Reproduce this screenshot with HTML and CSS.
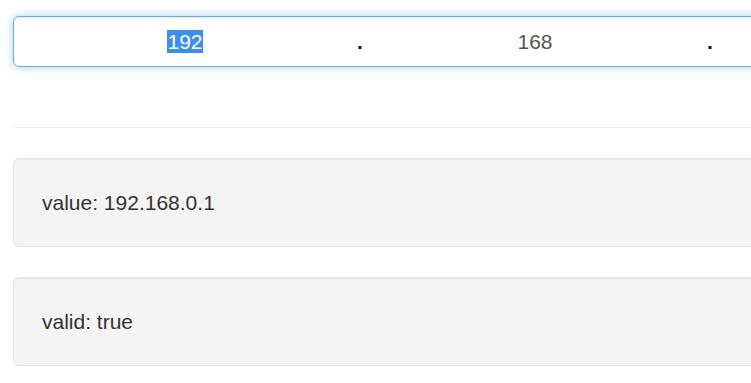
FILE: index.html
```html
<!DOCTYPE html>
<html lang="en">
<head>
    <meta charset="UTF-8">
    <meta name="viewport" content="width=device-width, initial-scale=1.0">
    <title>IP Address Input</title>
    <link rel="stylesheet" href="styles.css">
</head>
<body>
    <div class="page">
        <div class="ip-input">
            <div class="octet"><span class="selected">192</span></div>
            <div class="dot">.</div>
            <div class="octet">168</div>
            <div class="dot">.</div>
            <div class="octet">0</div>
            <div class="dot">.</div>
            <div class="octet">1</div>
        </div>

        <hr>

        <div class="well">value: 192.168.0.1</div>
        <div class="well">valid: true</div>
    </div>
</body>
</html>
```

FILE: styles.css
```css
body {
    margin: 0;
    font-family: "Liberation Sans", Arial, sans-serif;
    font-size: 21px;
    line-height: 30px;
    color: #333;
    background-color: #fff;
    overflow: hidden;
}

.page {
    width: 1500px;
    padding: 16px 0 0 13px;
}

.ip-input {
    display: flex;
    height: 51px;
    box-sizing: border-box;
    border: 1px solid #66afe9;
    border-radius: 6px;
    box-shadow: inset 0 1px 1px rgba(0, 0, 0, 0.075), 0 0 8px rgba(102, 175, 233, 0.6);
}

.octet {
    width: 342px;
    flex: none;
    text-align: center;
    line-height: 49px;
    color: #555;
}

.selected {
    background-color: #3b8eea;
    color: #fff;
}

.dot {
    width: 8px;
    flex: none;
    text-align: center;
    line-height: 49px;
    color: #111;
    font-weight: bold;
}

hr {
    margin: 60px 0 30px;
    border: 0;
    border-top: 1px solid #eee;
}

.well {
    padding: 29px 28px 28px;
    margin-bottom: 30px;
    background-color: #f4f4f4;
    border: 1px solid #e3e3e3;
    border-radius: 6px;
    box-shadow: inset 0 1px 1px rgba(0, 0, 0, 0.05);
}
```
